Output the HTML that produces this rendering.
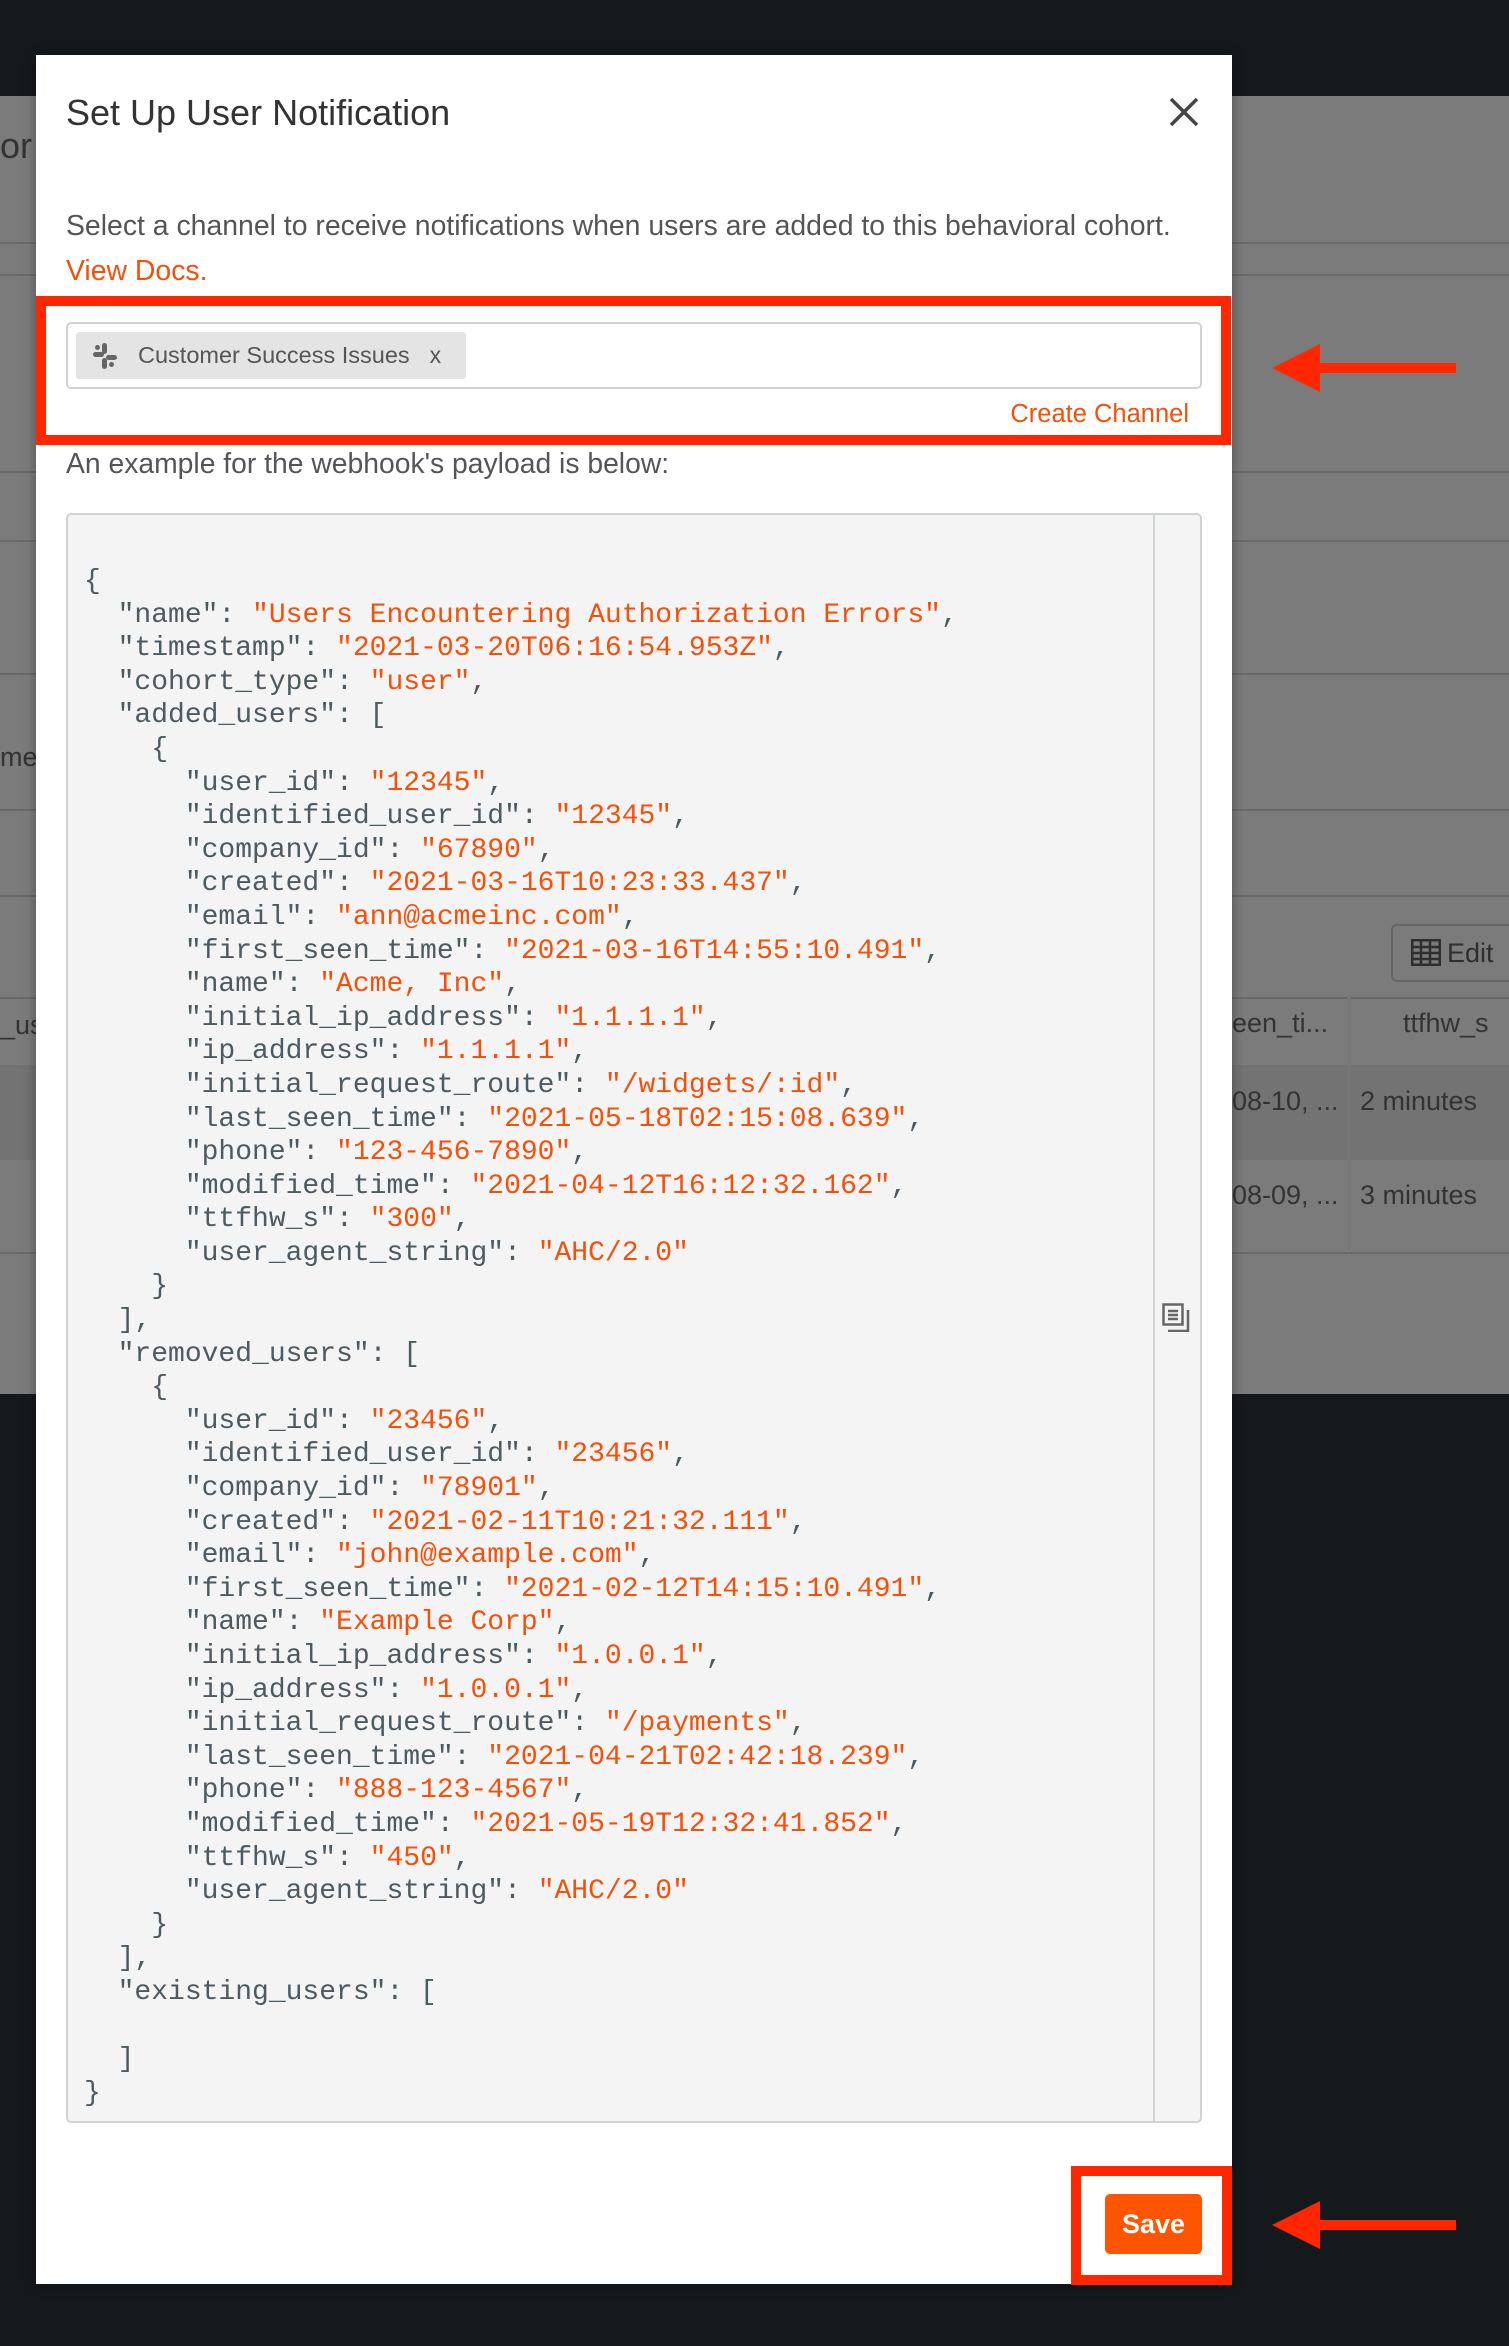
<!DOCTYPE html>
<html><head><meta charset="utf-8"><style>
*{margin:0;padding:0;box-sizing:border-box}
body{width:1509px;height:2346px;background:#16191c;position:relative;overflow:hidden;font-family:"Liberation Sans",sans-serif}
.abs{position:absolute}
.bg{left:0;top:96px;width:1509px;height:1298px;background:#7b7b7b}
.hl{position:absolute;height:2px;background:#6a6a6a;left:0;width:1509px}
.modal{left:36px;top:55px;width:1196px;height:2229px;background:#fff;box-shadow:0 0 12px rgba(0,0,0,.35)}
.code{position:absolute;left:66px;top:513px;width:1136px;height:1610px;background:#f4f4f4;border:2px solid #cfd3d4;border-radius:5px}
pre{position:absolute;left:84px;top:565px;font-family:"Liberation Mono","DejaVu Sans Mono",monospace;font-size:28px;line-height:33.6px;color:#4c5a61;letter-spacing:0}
pre b{font-weight:normal;color:#f5500a}
.red{position:absolute;border:10px solid #ff2600}
</style></head><body>
<div class="abs bg"></div>
<div class="hl" style="top:242px"></div><div class="hl" style="top:274px"></div>
<div class="hl" style="top:471px"></div><div class="hl" style="top:540px"></div>
<div class="hl" style="top:673px"></div><div class="hl" style="top:809px"></div>
<div class="hl" style="top:895px"></div><div class="hl" style="top:997px"></div>
<div class="hl" style="top:1252px"></div>
<div class="abs" style="left:0;top:1065px;width:1509px;height:95px;background:#737373"></div>
<div class="abs" style="left:0;top:125px;font-size:36px;color:#333">or</div>
<div class="abs" style="left:0;top:742px;font-size:27px;color:#333">me</div>
<div class="abs" style="left:0;top:1010px;font-size:27px;color:#333">_us</div>
<div class="abs" style="left:1391px;top:924px;width:130px;height:58px;border:2px solid #666;border-radius:6px;font-size:27px;color:#2e2e2e;padding:12px 0 0 18px"><svg width="30" height="27" viewBox="0 0 30 27" style="vertical-align:-4px;margin-right:6px"><rect x="1" y="1" width="28" height="25" fill="none" stroke="#2e2e2e" stroke-width="3"/><path d="M1 8H29M1 14H29M1 20H29M10 1V26M19 1V26" stroke="#2e2e2e" stroke-width="2.5"/></svg>Edit</div>
<div class="abs" style="left:1232px;top:1008px;font-size:27px;color:#333">een_ti...</div>
<div class="abs" style="left:1348px;top:995px;width:2px;height:258px;background:#777"></div>
<div class="abs" style="left:1403px;top:1008px;font-size:27px;color:#333">ttfhw_s</div>
<div class="abs" style="left:1232px;top:1086px;font-size:27px;color:#333">08-10, ...</div>
<div class="abs" style="left:1360px;top:1086px;font-size:27px;color:#333">2 minutes</div>
<div class="abs" style="left:1232px;top:1180px;font-size:27px;color:#333">08-09, ...</div>
<div class="abs" style="left:1360px;top:1180px;font-size:27px;color:#333">3 minutes</div>

<div class="abs modal"></div>
<div class="abs" style="left:66px;top:92px;font-size:36px;color:#333">Set Up User Notification</div>
<svg class="abs" style="left:1168px;top:96px" width="32" height="32" viewBox="0 0 32 32"><path d="M3 3L29 29M29 3L3 29" stroke="#444" stroke-width="3.5"/></svg>
<div class="abs" style="left:66px;top:210px;font-size:28.4px;color:#555">Select a channel to receive notifications when users are added to this behavioral cohort.</div>
<div class="abs" style="left:66px;top:255px;font-size:28.4px;color:#f5500a">View Docs.</div>
<div class="red" style="left:36px;top:296px;width:1195px;height:149px"></div>
<div class="abs" style="left:66px;top:322px;width:1136px;height:67px;border:2px solid #cfd3d4;border-radius:5px"></div>
<div class="abs" style="left:76px;top:332px;width:390px;height:47px;background:#e4e4e4;border-radius:3px;font-size:23.5px;color:#555;padding:10px 0 0 62px">Customer Success Issues<span style="margin-left:20px;font-size:23px">x</span></div>
<svg class="abs" style="left:93px;top:343px" width="24" height="26" viewBox="0 0 24 26"><g fill="#666"><rect x="9" y="0" width="5" height="11" rx="2.5"/><rect x="9" y="15" width="5" height="11" rx="2.5"/><rect x="0" y="9" width="11" height="5" rx="2.5"/><rect x="13" y="12" width="11" height="5" rx="2.5"/><rect x="2" y="2" width="5" height="5" rx="2.5"/><rect x="16" y="19" width="5" height="5" rx="2.5"/></g></svg>
<div class="abs" style="right:320px;top:400px;font-size:25.5px;color:#f5500a">Create Channel</div>
<div class="abs" style="left:66px;top:447px;font-size:28.3px;color:#555">An example for the webhook's payload is below:</div>
<div class="code"><div style="position:absolute;left:1085px;top:0;width:2px;height:100%;background:#cfd3d4"></div></div>
<svg class="abs" style="left:1162px;top:1303px" width="28" height="29" viewBox="0 0 28 29"><g fill="none" stroke="#666" stroke-width="2.5"><rect x="1.5" y="1.5" width="19" height="20"/><path d="M6 28H26V7"/><path d="M6 8H16M6 12H16M6 16H16"/></g></svg>
<pre>{
  "name": <b>"Users Encountering Authorization Errors"</b>,
  "timestamp": <b>"2021-03-20T06:16:54.953Z"</b>,
  "cohort_type": <b>"user"</b>,
  "added_users": [
    {
      "user_id": <b>"12345"</b>,
      "identified_user_id": <b>"12345"</b>,
      "company_id": <b>"67890"</b>,
      "created": <b>"2021-03-16T10:23:33.437"</b>,
      "email": <b>"ann@acmeinc.com"</b>,
      "first_seen_time": <b>"2021-03-16T14:55:10.491"</b>,
      "name": <b>"Acme, Inc"</b>,
      "initial_ip_address": <b>"1.1.1.1"</b>,
      "ip_address": <b>"1.1.1.1"</b>,
      "initial_request_route": <b>"/widgets/:id"</b>,
      "last_seen_time": <b>"2021-05-18T02:15:08.639"</b>,
      "phone": <b>"123-456-7890"</b>,
      "modified_time": <b>"2021-04-12T16:12:32.162"</b>,
      "ttfhw_s": <b>"300"</b>,
      "user_agent_string": <b>"AHC/2.0"</b>
    }
  ],
  "removed_users": [
    {
      "user_id": <b>"23456"</b>,
      "identified_user_id": <b>"23456"</b>,
      "company_id": <b>"78901"</b>,
      "created": <b>"2021-02-11T10:21:32.111"</b>,
      "email": <b>"john@example.com"</b>,
      "first_seen_time": <b>"2021-02-12T14:15:10.491"</b>,
      "name": <b>"Example Corp"</b>,
      "initial_ip_address": <b>"1.0.0.1"</b>,
      "ip_address": <b>"1.0.0.1"</b>,
      "initial_request_route": <b>"/payments"</b>,
      "last_seen_time": <b>"2021-04-21T02:42:18.239"</b>,
      "phone": <b>"888-123-4567"</b>,
      "modified_time": <b>"2021-05-19T12:32:41.852"</b>,
      "ttfhw_s": <b>"450"</b>,
      "user_agent_string": <b>"AHC/2.0"</b>
    }
  ],
  "existing_users": [

  ]
}</pre>
<div class="red" style="left:1071px;top:2166px;width:161px;height:119px"></div>
<div class="abs" style="left:1105px;top:2194px;width:97px;height:60px;background:#ff5500;border-radius:5px;color:#fff;font-size:27px;font-weight:bold;text-align:center;line-height:60px">Save</div>
<svg class="abs" style="left:1268px;top:340px" width="192" height="56" viewBox="0 0 192 56"><path d="M4 28L52 4V23H188V33H52V52Z" fill="#ff2600"/></svg>
<svg class="abs" style="left:1268px;top:2197px" width="192" height="56" viewBox="0 0 192 56"><path d="M4 28L52 4V23H188V33H52V52Z" fill="#ff2600"/></svg>
</body></html>
